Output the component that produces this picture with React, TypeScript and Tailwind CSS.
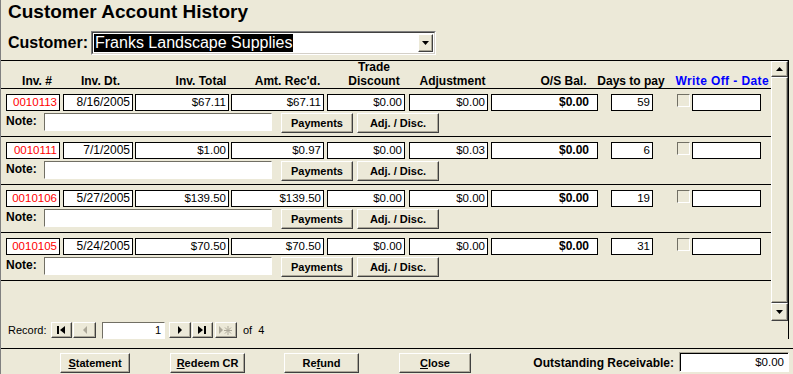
import React from "react"

const records = [
    { inv: "0010113", dt: "8/16/2005", total: "$67.11", recd: "$67.11", trade: "$0.00", adj: "$0.00", bal: "$0.00", days: "59" },
    { inv: "0010111", dt: "7/1/2005", total: "$1.00", recd: "$0.97", trade: "$0.00", adj: "$0.03", bal: "$0.00", days: "6" },
    { inv: "0010106", dt: "5/27/2005", total: "$139.50", recd: "$139.50", trade: "$0.00", adj: "$0.00", bal: "$0.00", days: "19" },
    { inv: "0010105", dt: "5/24/2005", total: "$70.50", recd: "$70.50", trade: "$0.00", adj: "$0.00", bal: "$0.00", days: "31" },
]

const raised = "border border-t-white border-l-white border-r-[#404040] border-b-[#404040] shadow-[inset_-1px_-1px_0_#ACA899] bg-[#ECE9D8]"
const sunken = "border border-t-[#716F64] border-l-[#716F64] border-r-white border-b-white"
const field = "h-[17px] border border-black bg-white text-right pr-[2px] leading-[15px] overflow-hidden whitespace-nowrap"

function Btn({ className, children }: { className: string; children: React.ReactNode }) {
    return (
        <div className={`${raised} ${className} flex items-center justify-center text-[11px] font-bold leading-none`}>
            {children}
        </div>
    )
}

function Record({ r }: { r: (typeof records)[number] }) {
    return (
        <div className="h-[48px] border-b border-black pt-[5px]">
            <div className="flex">
                <div className={`${field} ml-[5px] w-[54px] text-left pl-[2px] text-[11.5px] text-[#FF0000]`}>{r.inv}</div>
                <div className={`${field} ml-[3px] w-[70px] text-[12px]`}>{r.dt}</div>
                <div className={`${field} ml-[2px] w-[94px] text-[11.5px]`}>{r.total}</div>
                <div className={`${field} ml-[2px] w-[93px] text-[11.5px]`}>{r.recd}</div>
                <div className={`${field} ml-[3px] w-[78px] text-[11.5px]`}>{r.trade}</div>
                <div className={`${field} ml-[4px] w-[79px] text-[11.5px]`}>{r.adj}</div>
                <div className={`${field} ml-[3px] w-[107px] text-[12px] font-bold pr-[8px]`}>{r.bal}</div>
                <div className={`${field} ml-[13px] w-[42px] text-[11.5px]`}>{r.days}</div>
                <div className={`${sunken} ml-[24px] w-[13px] h-[13px] bg-[#ECE9D8]`} />
                <div className={`${field} ml-[2px] w-[69px]`} />
            </div>
            <div className="flex mt-[2px] items-start">
                <div className="ml-[5px] w-[38px] text-[12px] font-bold leading-[17px]">Note:</div>
                <div className={`${sunken} w-[228px] h-[18px] bg-white`} />
                <Btn className="ml-[9px] w-[72px] h-[20px]">Payments</Btn>
                <Btn className="ml-[4px] w-[82px] h-[20px]">Adj. / Disc.</Btn>
            </div>
        </div>
    )
}

function NavBtn({ className, children }: { className: string; children: React.ReactNode }) {
    return <div className={`${raised} ${className} h-[16px] flex items-center justify-center`}>{children}</div>
}

export default function App() {
    return (
        <div className="w-[793px] h-[374px] bg-[#ECE9D8] border-l border-[#808080] overflow-hidden font-['Liberation_Sans',Arial,sans-serif] text-black">
            <div className="h-[31px] pl-[7px] pt-[1px] text-[19px] font-bold leading-[21px]">Customer Account History</div>

            <div className="flex h-[24px] items-center">
                <div className="ml-[7px] w-[83px] text-[16px] font-bold leading-[18px]">Customer:</div>
                <div className="w-[345px] h-[24px] border border-t-[#808080] border-l-[#808080] border-r-white border-b-white">
                    <div className="h-full border border-t-[#404040] border-l-[#404040] border-r-[#D4D0C8] border-b-[#D4D0C8] bg-white flex items-center">
                        <span className="ml-[1px] bg-black text-white text-[16px] leading-[18px] px-[1px]">Franks Landscape Supplies</span>
                        <div className="flex-1" />
                        <div className={`${raised} w-[15px] h-[18px] mr-[1px] flex items-center justify-center`}>
                            <svg width="7" height="4" viewBox="0 0 7 4"><polygon points="0,0 7,0 3.5,4" fill="#000" /></svg>
                        </div>
                    </div>
                </div>
            </div>

            <div className="mt-[5px] w-[788px] border-t border-r border-black">
                <div className="flex h-[260px]">
                    <div className="w-[770px]">
                        <div className="h-[28px] border-b border-black flex items-end text-[12px] font-bold leading-[14px]">
                            <div className="ml-[17px] w-[38px] text-center">Inv. #</div>
                            <div className="ml-[18px] w-[53px] text-center">Inv. Dt.</div>
                            <div className="ml-[41px] w-[66px] text-center">Inv. Total</div>
                            <div className="ml-[15px] w-[77px] text-center">Amt. Rec'd.</div>
                            <div className="ml-[14px] w-[68px] text-center">Trade<br />Discount</div>
                            <div className="ml-[6px] w-[77px] text-center">Adjustment</div>
                            <div className="ml-[42px] w-[61px] text-center">O/S Bal.</div>
                            <div className="w-[74px] text-center whitespace-nowrap">Days to pay</div>
                            <div className="ml-[2px] w-[99px] text-right whitespace-nowrap text-[#0000FF] tracking-[0.4px]">Write Off - Date</div>
                        </div>
                        {records.map((r) => (
                            <Record key={r.inv} r={r} />
                        ))}
                    </div>
                    <div className="w-[17px] flex flex-col">
                        <div className={`${raised} h-[16px] flex items-center justify-center`}>
                            <svg width="7" height="4" viewBox="0 0 7 4"><polygon points="3.5,0 7,4 0,4" fill="#000" /></svg>
                        </div>
                        <div className={`${raised} flex-1`} />
                        <div className={`${raised} h-[18px] flex items-center justify-center`}>
                            <svg width="7" height="4" viewBox="0 0 7 4"><polygon points="0,0 7,0 3.5,4" fill="#000" /></svg>
                        </div>
                    </div>
                </div>
                <div className="h-[18px] flex items-center text-[11px]">
                    <div className="ml-[7px] w-[43px]">Record:</div>
                    <NavBtn className="w-[21px]">
                        <svg width="9" height="8" viewBox="0 0 9 8"><rect x="0" y="0" width="2" height="8" fill="#000" /><polygon points="8,0 8,8 3,4" fill="#000" /></svg>
                    </NavBtn>
                    <NavBtn className="ml-[1px] w-[23px]">
                        <svg width="6" height="8" viewBox="0 0 6 8"><polygon points="5,0 5,8 1,4" fill="#ACA899" /></svg>
                    </NavBtn>
                    <div className={`${sunken} ml-[6px] w-[63px] h-[17px] bg-white text-right pr-[3px] leading-[15px]`}>1</div>
                    <NavBtn className="ml-[4px] w-[22px]">
                        <svg width="6" height="8" viewBox="0 0 6 8"><polygon points="1,0 1,8 5,4" fill="#000" /></svg>
                    </NavBtn>
                    <NavBtn className="ml-[1px] w-[21px]">
                        <svg width="9" height="8" viewBox="0 0 9 8"><polygon points="0,0 0,8 5,4" fill="#000" /><rect x="6" y="0" width="2" height="8" fill="#000" /></svg>
                    </NavBtn>
                    <NavBtn className="ml-[2px] w-[22px]">
                        <svg width="14" height="9" viewBox="0 0 14 9"><polygon points="0,0 0,8 4,4" fill="#ACA899" /><path d="M9 0v9M5 4.5h8M6 1.5l6 6M12 1.5l-6 6" stroke="#ACA899" strokeWidth="1" /></svg>
                    </NavBtn>
                    <div className="ml-[6px]">of&nbsp; 4</div>
                </div>
            </div>

            <div className="mt-[9px] border-t border-black flex items-start pt-[4px]">
                <Btn className="ml-[59px] w-[70px] h-[20px]"><span><u>S</u>tatement</span></Btn>
                <Btn className="ml-[40px] w-[75px] h-[20px]"><span><u>R</u>edeem CR</span></Btn>
                <Btn className="ml-[39px] w-[75px] h-[20px]"><span>Re<u>f</u>und</span></Btn>
                <Btn className="ml-[40px] w-[72px] h-[20px]"><span><u>C</u>lose</span></Btn>
                <div className="flex-1 text-right pr-[5px] text-[12px] font-bold leading-[20px]">Outstanding Receivable:</div>
                <div className="mr-[4px] -mt-[1px] w-[110px] h-[20px] border border-t-[#ACA899] border-l-[#ACA899] border-r-white border-b-white">
                    <div className="h-full border-t border-l border-black bg-white text-right pr-[4px] text-[11.5px] leading-[17px]">$0.00</div>
                </div>
            </div>
        </div>
    )
}
